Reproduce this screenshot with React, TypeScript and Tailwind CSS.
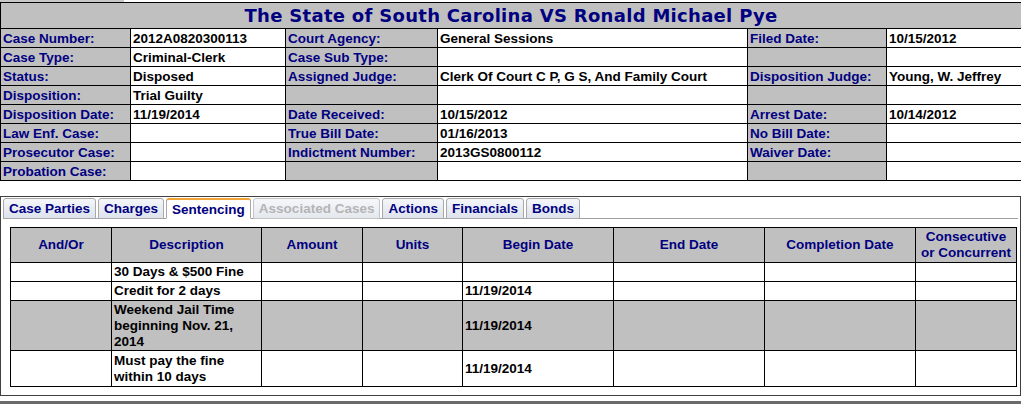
const caseInfo: string[][] = [
  ["Case Number:", "2012A0820300113", "Court Agency:", "General Sessions", "Filed Date:", "10/15/2012"],
  ["Case Type:", "Criminal-Clerk", "Case Sub Type:", "", "", ""],
  ["Status:", "Disposed", "Assigned Judge:", "Clerk Of Court C P, G S, And Family Court", "Disposition Judge:", "Young, W. Jeffrey"],
  ["Disposition:", "Trial Guilty", "", "", "", ""],
  ["Disposition Date:", "11/19/2014", "Date Received:", "10/15/2012", "Arrest Date:", "10/14/2012"],
  ["Law Enf. Case:", "", "True Bill Date:", "01/16/2013", "No Bill Date:", ""],
  ["Prosecutor Case:", "", "Indictment Number:", "2013GS0800112", "Waiver Date:", ""],
  ["Probation Case:", "", "", "", "", ""],
];

const tabs = [
  { name: "Case Parties" },
  { name: "Charges" },
  { name: "Sentencing", active: true },
  { name: "Associated Cases", disabled: true },
  { name: "Actions" },
  { name: "Financials" },
  { name: "Bonds" },
];

const headers = ["And/Or", "Description", "Amount", "Units", "Begin Date", "End Date", "Completion Date"];

const sentences = [
  { desc: "30 Days & $500 Fine", begin: "", row: "h-[19px] bg-white" },
  { desc: "Credit for 2 days", begin: "11/19/2014", row: "h-[19px] bg-white" },
  { desc: "Weekend Jail Time beginning Nov. 21, 2014", begin: "11/19/2014", row: "h-[50px] bg-[#c0c0c0]" },
  { desc: "Must pay the fine within 10 days", begin: "11/19/2014", row: "h-[36px] bg-white" },
];

const App = () => {
  return (
    <div className="w-[1021px] bg-white font-['Liberation_Sans',Arial,sans-serif] text-[13.5px] font-bold text-black">
      <div className="h-[2px] w-[124px] bg-[#c8c8c8]" />

      {/* CASE HEADER */}
      <table className="w-[1021px] table-fixed border-collapse">
        <colgroup>
          <col className="w-[130px]" />
          <col className="w-[155px]" />
          <col className="w-[152px]" />
          <col className="w-[310px]" />
          <col className="w-[139px]" />
          <col className="w-[135px]" />
        </colgroup>
        <tbody>
          <tr>
            <td
              colSpan={6}
              className="h-[26px] border border-black bg-[#c0c0c0] p-0 text-center align-middle font-['DejaVu_Sans',sans-serif] text-[18px] leading-[23px] font-bold tracking-[0.3px] text-[#000080]"
            >
              The State of South Carolina VS Ronald Michael Pye
            </td>
          </tr>
          {caseInfo.map((row, r) => (
            <tr key={r}>
              {row.map((cell, i) =>
                i % 2 === 0 ? (
                  <td key={i} className="h-[19px] border border-black bg-[#c0c0c0] px-[2px] py-0 leading-[17px] whitespace-nowrap text-[#000080]">
                    {cell}
                  </td>
                ) : (
                  <td key={i} className="h-[19px] border border-black bg-white px-[2px] py-0 leading-[17px] whitespace-nowrap">
                    {cell}
                  </td>
                )
              )}
            </tr>
          ))}
        </tbody>
      </table>

      {/* TABS */}
      <div className="mt-[15px] border border-[#404040] px-[2px] pt-[1px] pb-[8px]">
        <div className="flex gap-[2px] border-b border-[#a0a0a0]">
          {tabs.map((t) =>
            t.active ? (
              <div key={t.name} className="-mb-px h-[21px] rounded-t-[3px] border border-t-2 border-[#a8a8a8] border-t-[#f0a436] border-b-white bg-white px-[5px] leading-[19px] text-[#000080]">
                {t.name}
              </div>
            ) : t.disabled ? (
              <div key={t.name} className="-mb-px h-[21px] rounded-t-[3px] border border-[#c4c4c4] bg-linear-to-b from-[#f6f7fa] to-[#e4e8ee] px-[5px] leading-[20px] text-[#b4b4b4]">
                {t.name}
              </div>
            ) : (
              <div key={t.name} className="-mb-px h-[21px] rounded-t-[3px] border border-[#a8a8a8] bg-linear-to-b from-[#f4f6fa] to-[#dde3ec] px-[5px] leading-[20px] text-[#000080]">
                {t.name}
              </div>
            )
          )}
        </div>

        <div className="pt-[8px] pl-[7px]">
          <table className="w-[1006px] table-fixed border-collapse">
            <colgroup>
              <col className="w-[101px]" />
              <col className="w-[150px]" />
              <col className="w-[101px]" />
              <col className="w-[100px]" />
              <col className="w-[151px]" />
              <col className="w-[151px]" />
              <col className="w-[151px]" />
              <col className="w-[101px]" />
            </colgroup>
            <thead>
              <tr>
                {headers.map((h) => (
                  <th key={h} className="h-[35px] border border-black bg-[#c0c0c0] px-[2px] py-0 text-center align-middle leading-[16px] font-bold text-[#000080]">
                    {h}
                  </th>
                ))}
                <th className="h-[35px] border border-black bg-[#c0c0c0] px-0 py-0 text-center align-middle leading-[16px] font-bold whitespace-nowrap text-[#000080]">
                  Consecutive
                  <br />
                  or Concurrent
                </th>
              </tr>
            </thead>
            <tbody>
              {sentences.map((s, r) => (
                <tr key={r} className={s.row}>
                  <td className="border border-black p-0"></td>
                  <td className="border border-black px-[2px] py-0 align-middle leading-[16px]">{s.desc}</td>
                  <td className="border border-black p-0"></td>
                  <td className="border border-black p-0"></td>
                  <td className="border border-black px-[2px] py-0 align-middle leading-[16px]">{s.begin}</td>
                  <td className="border border-black p-0"></td>
                  <td className="border border-black p-0"></td>
                  <td className="border border-black p-0"></td>
                </tr>
              ))}
            </tbody>
          </table>
        </div>
      </div>
      <div className="mt-[5px] h-[3px] bg-[#6a6a6a]" />
    </div>
  );
};

export default App;
